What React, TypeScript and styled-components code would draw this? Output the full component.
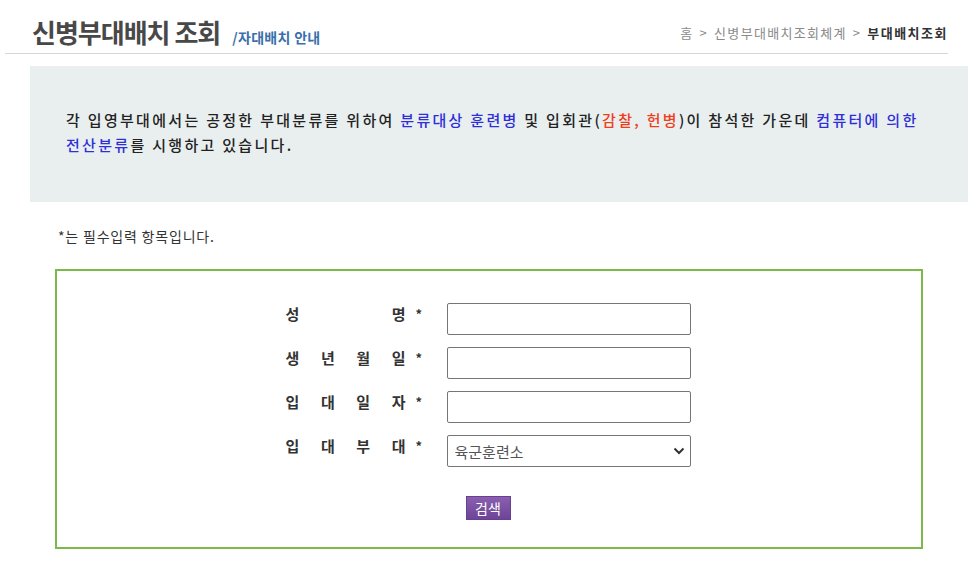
import styled, { createGlobalStyle } from 'styled-components'

const GlobalStyle = createGlobalStyle`
  body {
    margin: 0;
    background: #fff;
    font-family: "Noto Sans CJK KR", "Noto Sans", sans-serif;
    color: #333;
  }
`

const Page = styled.main`
  width: 971px;
  padding-bottom: 20px;
`

const Header = styled.header`
  display: flex;
  align-items: flex-end;
  justify-content: space-between;
  margin-left: 5px;
  width: 943px;
  height: 54px;
  border-bottom: 1px solid #d6d6d6;
  box-sizing: border-box;
`

const TitleGroup = styled.div`
  display: flex;
  align-items: baseline;
  gap: 12px;
  padding-left: 27px;
  padding-bottom: 6px;
`

const Title = styled.h1`
  margin: 0;
  font-size: 26px;
  font-weight: 700;
  color: #484848;
  letter-spacing: -1px;
  line-height: 30px;
`

const SubTitle = styled.span`
  font-size: 14px;
  font-weight: 700;
  color: #3b6fab;
  letter-spacing: 0.3px;
`

const Crumbs = styled.nav`
  display: flex;
  align-items: center;
  gap: 6px;
  padding-bottom: 11px;
  font-size: 13px;
  color: #8a8a8a;
  letter-spacing: 1.3px;
`

const Current = styled.strong`
  color: #333;
  font-weight: 700;
  letter-spacing: 1.5px;
`

const Notice = styled.section`
  margin: 12px 3px 0 30px;
  height: 136px;
  box-sizing: border-box;
  padding: 41px 40px 0 36px;
  background: #e9efef;
  font-size: 15px;
  font-weight: 500;
  line-height: 25px;
  letter-spacing: 2.3px;
  color: #222;
`

const Mark = styled.span<{ $tone: 'blue' | 'red' }>`
  color: ${p => (p.$tone === 'blue' ? '#2f2fd8' : '#ef3e1c')};
`

const Required = styled.p`
  margin: 24px 0 0 58px;
  font-size: 14px;
  color: #333;
  letter-spacing: 0.8px;
`

const FormBox = styled.form`
  margin: 23px 0 0 55px;
  width: 868px;
  height: 280px;
  box-sizing: border-box;
  border: 2px solid #7bb94b;
  display: flex;
  flex-direction: column;
  align-items: center;
  padding-top: 32px;
`

const Rows = styled.div`
  display: flex;
  flex-direction: column;
  gap: 12px;
  margin-left: -2px;
`

const Row = styled.div`
  display: flex;
  align-items: center;
`

const Label = styled.label`
  display: flex;
  align-items: center;
  width: 161px;
  font-size: 15px;
  font-weight: 700;
  color: #333;
  margin-top: -12px;
`

const Chars = styled.span`
  display: flex;
  justify-content: space-between;
  width: 120px;
`

const Star = styled.span`
  margin-left: 10px;
  font-size: 13px;
`

const Input = styled.input`
  width: 244px;
  height: 32px;
  box-sizing: border-box;
  border: 1px solid #767676;
  border-radius: 2px;
  background: #fff;
`

const SelectWrap = styled.div`
  position: relative;
  width: 244px;
  height: 32px;
`

const Select = styled.select`
  width: 100%;
  height: 100%;
  box-sizing: border-box;
  border: 1px solid #767676;
  border-radius: 2px;
  background: #fff;
  appearance: none;
  padding-left: 7px;
  font-family: inherit;
  font-size: 15px;
  color: #555;
`

const Chevron = styled.svg`
  position: absolute;
  right: 6px;
  top: 12px;
  pointer-events: none;
`

const Button = styled.button`
  margin-top: 29px;
  margin-left: -2px;
  width: 45px;
  height: 24px;
  border: 1px solid #6a3f92;
  background: linear-gradient(#8a5fb0, #6d4496);
  color: #fff;
  font-family: inherit;
  font-size: 14px;
  padding: 0;
  line-height: 20px;
`

const fields: { chars: string[] }[] = [
  { chars: ['성', '명'] },
  { chars: ['생', '년', '월', '일'] },
  { chars: ['입', '대', '일', '자'] },
]

export default function App() {
  return (
    <Page>
      <GlobalStyle />
      <Header>
        <TitleGroup>
          <Title>신병부대배치 조회</Title>
          <SubTitle>/자대배치 안내</SubTitle>
        </TitleGroup>
        <Crumbs>
          <span>홈</span>
          <span>&gt;</span>
          <span>신병부대배치조회체계</span>
          <span>&gt;</span>
          <Current>부대배치조회</Current>
        </Crumbs>
      </Header>

      <Notice>
        각 입영부대에서는 공정한 부대분류를 위하여 <Mark $tone="blue">분류대상 훈련병</Mark> 및 입회관(
        <Mark $tone="red">감찰, 헌병</Mark>)이 참석한 가운데 <Mark $tone="blue">컴퓨터에 의한</Mark>{' '}
        <Mark $tone="blue">전산분류</Mark>를 시행하고 있습니다.
      </Notice>

      <Required>*는 필수입력 항목입니다.</Required>

      <FormBox onSubmit={e => e.preventDefault()}>
        <Rows>
          {fields.map((f, i) => (
            <Row key={i}>
              <Label>
                <Chars>
                  {f.chars.map((c, j) => (
                    <span key={j}>{c}</span>
                  ))}
                </Chars>
                <Star>*</Star>
              </Label>
              <Input type="text" />
            </Row>
          ))}
          <Row>
            <Label>
              <Chars>
                <span>입</span>
                <span>대</span>
                <span>부</span>
                <span>대</span>
              </Chars>
              <Star>*</Star>
            </Label>
            <SelectWrap>
              <Select defaultValue="육군훈련소">
                <option>육군훈련소</option>
              </Select>
              <Chevron width="12" height="8" viewBox="0 0 12 8">
                <path d="M1.5 1.5 L6 6 L10.5 1.5" fill="none" stroke="#333" strokeWidth="2" />
              </Chevron>
            </SelectWrap>
          </Row>
        </Rows>
        <Button type="submit">검색</Button>
      </FormBox>
    </Page>
  )
}
